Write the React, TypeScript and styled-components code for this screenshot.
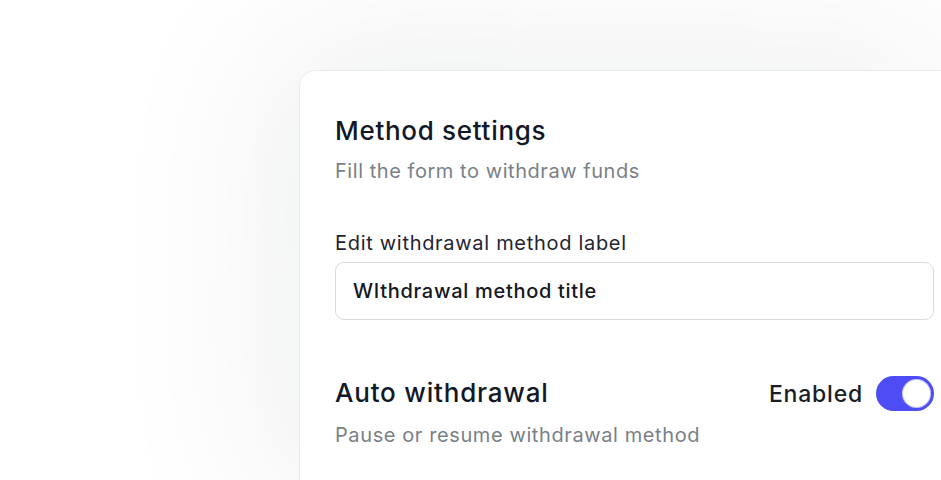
import React, { useState } from "react";
import styled, { createGlobalStyle } from "styled-components";

const GlobalStyle = createGlobalStyle`
  html, body {
    margin: 0;
    padding: 0;
    background: #ffffff;
  }
  body {
    font-family: Inter, "Noto Sans", sans-serif;
    -webkit-font-smoothing: antialiased;
  }
`;

const Page = styled.div`
  width: 941px;
  height: 480px;
  overflow: hidden;
  background: #ffffff;
  padding: 70px 0 0 299px;
  box-sizing: border-box;
`;

const Card = styled.section`
  width: 672px;
  min-height: 460px;
  box-sizing: border-box;
  padding: 43px 36px 36px 35px;
  background: #ffffff;
  border: 1px solid #ececee;
  border-radius: 16px;
  box-shadow: -30px -24px 170px rgba(15, 23, 42, 0.07);
`;

const Header = styled.div`
  display: flex;
  flex-direction: column;
  gap: 9px;
  margin-bottom: 45px;
`;

const Title = styled.h2`
  margin: 0;
  font-size: 26px;
  line-height: 34px;
  font-weight: 500;
  letter-spacing: 0.7px;
  color: #111827;
`;

const Subtitle = styled.p`
  margin: 0;
  font-size: 20px;
  line-height: 28px;
  font-weight: 400;
  letter-spacing: 0.55px;
  color: #7a7f87;
`;

const Field = styled.div`
  display: flex;
  flex-direction: column;
  gap: 6px;
  margin-bottom: 56px;
`;

const Label = styled.label`
  font-size: 20px;
  line-height: 26px;
  font-weight: 400;
  letter-spacing: 0.7px;
  color: #1f2430;
`;

const Input = styled.input`
  height: 58px;
  box-sizing: border-box;
  padding: 0 17px;
  border: 1.5px solid #d9dbdf;
  border-radius: 9px;
  font-family: inherit;
  font-size: 20px;
  font-weight: 500;
  letter-spacing: 0.7px;
  color: #15181f;
  background: #ffffff;
  outline: none;
`;

const SettingRow = styled.div`
  display: flex;
  align-items: flex-start;
  justify-content: space-between;
`;

const SettingText = styled.div`
  display: flex;
  flex-direction: column;
  gap: 11px;
`;

const SettingTitle = styled.h3`
  margin: 0;
  font-size: 26px;
  line-height: 34px;
  font-weight: 500;
  letter-spacing: 0.8px;
  color: #111827;
`;

const SettingHint = styled.p`
  margin: 0;
  font-size: 20px;
  line-height: 28px;
  letter-spacing: 0.6px;
  color: #7a7f87;
`;

const ToggleWrap = styled.label`
  display: flex;
  align-items: center;
  gap: 13px;
  height: 35px;
  cursor: pointer;
`;

const ToggleLabel = styled.span`
  font-size: 23px;
  line-height: 32px;
  font-weight: 500;
  letter-spacing: 0.8px;
  color: #1a1d24;
`;

const Track = styled.button<{ $on: boolean }>`
  position: relative;
  width: 58px;
  height: 35px;
  padding: 0;
  border: none;
  border-radius: 18px;
  background: ${({ $on }) => ($on ? "#4d4cf5" : "#d1d5db")};
  cursor: pointer;
`;

const Knob = styled.span<{ $on: boolean }>`
  position: absolute;
  top: 3px;
  left: ${({ $on }) => ($on ? "26px" : "3px")};
  width: 29px;
  height: 29px;
  border-radius: 50%;
  background: #ffffff;
  box-shadow: inset 0 0 0 1px rgba(77, 76, 245, 0.35);
  transition: left 0.2s;
`;

export default function App() {
  const [enabled, setEnabled] = useState(true);

  return (
    <>
      <GlobalStyle />
      <Page>
        <Card>
          <Header>
            <Title>Method settings</Title>
            <Subtitle>Fill the form to withdraw funds</Subtitle>
          </Header>

          <Field>
            <Label htmlFor="method-label">Edit withdrawal method label</Label>
            <Input id="method-label" defaultValue="WIthdrawal method title" />
          </Field>

          <SettingRow>
            <SettingText>
              <SettingTitle>Auto withdrawal</SettingTitle>
              <SettingHint>Pause or resume withdrawal method</SettingHint>
            </SettingText>
            <ToggleWrap>
              <ToggleLabel>{enabled ? "Enabled" : "Disabled"}</ToggleLabel>
              <Track
                type="button"
                $on={enabled}
                onClick={() => setEnabled(!enabled)}
              >
                <Knob $on={enabled} />
              </Track>
            </ToggleWrap>
          </SettingRow>
        </Card>
      </Page>
    </>
  );
}
